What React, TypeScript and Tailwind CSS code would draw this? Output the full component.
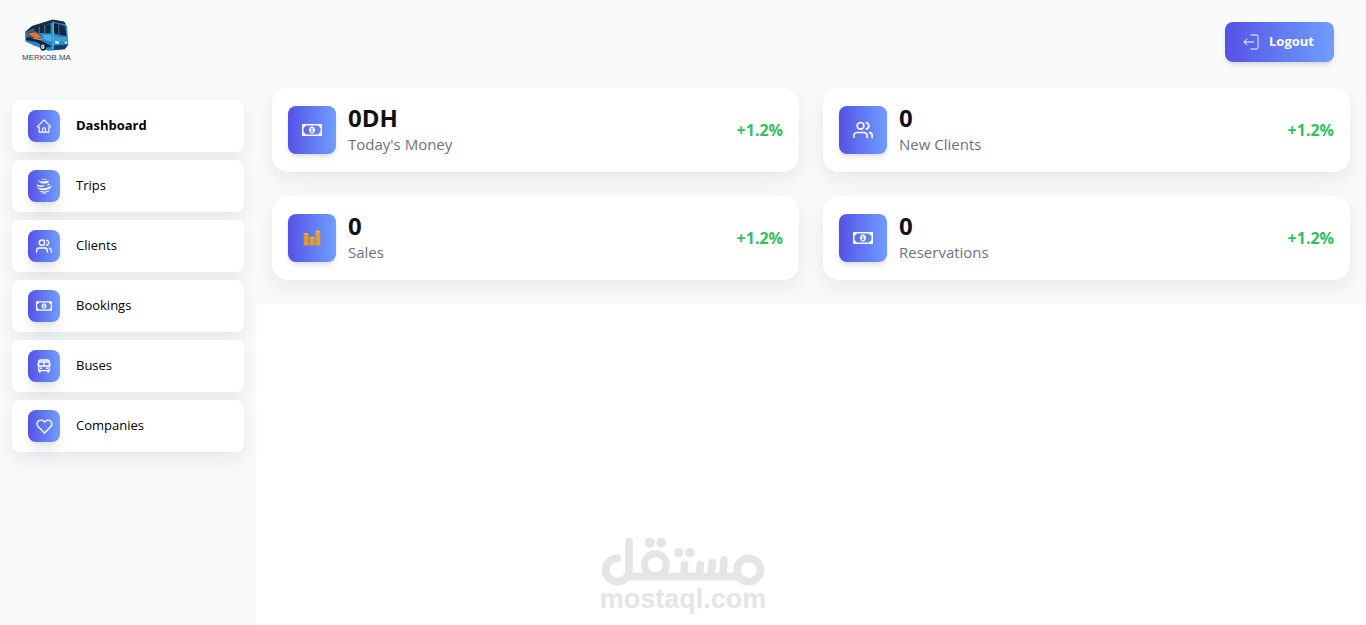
import React from "react";
import { AiOutlineHome } from "react-icons/ai";
import { FiUsers, FiHeart } from "react-icons/fi";
import { FaRegMoneyBillAlt } from "react-icons/fa";
import { BiBus } from "react-icons/bi";
import { FcSalesPerformance } from "react-icons/fc";
import { CiLogout } from "react-icons/ci";

type LinkItem = {
  title: string;
  href: string;
  icon: React.ReactNode;
};

type Stat = {
  value: string;
  label: string;
  percent: string;
  icon: React.ReactNode;
};

const TripsIcon: React.FC = () => (
  <svg
    viewBox="0 0 16 16"
    width="16"
    height="16"
    fill="currentColor"
    aria-hidden="true"
  >
    <path d="M5 .2C5.600 1.600 8 1.900 11.200.5 9.500 2.800 5.400 2.800 5 .2Z" />
    <path d="M2.500 2C3.800 3.800 8.500 4 12.300 2.600 13.200 3.600 12.500 4.700 11 5.200 7 6.200 2.200 4.800 2.500 2Z" />
    <path d="M.6 6.300C3 7.800 6 7.900 9.200 6.900 8 9.500 1 9.900.6 6.300Z" />
    <path d="M12 5.600C13.400 5.600 14 6.400 13 7.300L11.200 8.300Z" />
    <path d="M.8 9.100C4 11.300 10.500 10.900 15.800 7.600 15.400 12.800 2.500 14 .8 9.100Z" />
    <path d="M3.200 12.700C6 14 10.500 13.700 14 11.900 12 15.300 5 15.600 3.200 12.700Z" />
    <path d="M6.200 15C8 15.500 9.500 15.400 11 14.900 9.700 16.200 7.500 16.200 6.200 15Z" />
  </svg>
);

const links: LinkItem[] = [
  { title: "Dashboard", href: "#dashboard", icon: <AiOutlineHome size={16} /> },
  { title: "Trips", href: "#trips", icon: <TripsIcon /> },
  { title: "Clients", href: "#clients", icon: <FiUsers size={16} /> },
  { title: "Bookings", href: "#bookings", icon: <FaRegMoneyBillAlt size={16} /> },
  { title: "Buses", href: "#buses", icon: <BiBus size={16} /> },
  { title: "Companies", href: "#companies", icon: <FiHeart size={17} /> },
];

const stats: Stat[] = [
  {
    value: "0DH",
    label: "Today's Money",
    percent: "+1.2%",
    icon: <FaRegMoneyBillAlt size={20} />,
  },
  {
    value: "0",
    label: "New Clients",
    percent: "+1.2%",
    icon: <FiUsers size={20} />,
  },
  {
    value: "0",
    label: "Sales",
    percent: "+1.2%",
    icon: <FcSalesPerformance size={20} />,
  },
  {
    value: "0",
    label: "Reservations",
    percent: "+1.2%",
    icon: <FaRegMoneyBillAlt size={20} />,
  },
];

const BusLogo: React.FC = () => (
  <svg viewBox="40 24 140 100" width="47" height="34" aria-hidden="true">
    <path
      d="M46 64 70 46 128 29 162 35 171 48 175 104 164 117 116 121 76 107 47 93Z"
      fill="#2484c4"
    />
    <path d="M66 48 128 28 162 34 168 42 132 36 74 55 46 66Z" fill="#1d2b3f" />
    <path d="M75 52 122 41 122 69 72 67Z" fill="#182438" />
    <path d="M88 49v18M105 45v23" stroke="#3b86b8" strokeWidth="3" />
    <path d="M132 39 145 41 146 73 133 69Z" fill="#162033" />
    <path d="M147 42 165 48 170 77 149 74Z" fill="#1b263b" />
    <path d="M130 34v82" stroke="#5bb4e6" strokeWidth="4" />
    <path d="M50 67 72 58 94 76 83 92 60 84Z" fill="#5b4a4c" />
    <path d="M54 70 82 86 94 79 77 66Z" fill="#d97a43" />
    <path d="M51 80 84 86 126 108 112 111 79 95 49 89Z" fill="#142238" />
    <path d="M70 84 91 88 108 82" stroke="#e58b51" strokeWidth="3" fill="none" />
    <path d="M98 73 125 73 125 94 107 90Z" fill="#4bb2e9" />
    <path d="M132 78 171 82 173 96 132 92Z" fill="#3d9bd6" />
    <path d="M136 91 148 94 146 101 135 99ZM161 96 172 93 171 101Z" fill="#dce9f1" />
    <path d="M132 105 173 103 164 116 132 119Z" fill="#153b60" />
    <ellipse cx="100" cy="109" rx="9" ry="12" fill="#151e2c" />
    <ellipse cx="99" cy="109" rx="5" ry="7" fill="#f2f3f4" />
    <circle cx="99" cy="109" r="2" fill="#30394a" />
  </svg>
);

const Header: React.FC = () => {
  return (
    <header className="flex items-start justify-between bg-[#f9fafb] pr-8 pb-5 pl-5.5">
      <a
        href="#home"
        className="mt-4.5 flex flex-col items-center text-[#3c4350]"
      >
        <BusLogo />
        <span className="font-['Liberation_Sans',sans-serif] text-[8px] leading-3">
          MERKOB.MA
        </span>
      </a>
      <button
        type="button"
        className="mt-5.5 flex h-10 items-center gap-2 rounded-lg bg-linear-to-r from-[#5651e5] to-[#709dff] pr-5 pl-4 text-[13px] font-bold text-white shadow-md"
      >
        <CiLogout size={20} />
        Logout
      </button>
    </header>
  );
};

const Sidebar: React.FC = () => {
  return (
    <aside className="w-64 shrink-0 bg-[#f9fafb] px-3 pt-4">
      <nav>
        <ul className="space-y-2">
          {links.map((link, index) => (
            <li key={link.title}>
              <a
                href={link.href}
                className={`flex h-13 items-center gap-4 rounded-lg bg-white px-4 text-[13px] text-black shadow-[0_8px_20px_rgba(15,23,42,0.08)] ${
                  index === 0 ? "font-bold" : "font-normal"
                }`}
              >
                <span className="flex size-8 items-center justify-center rounded-lg bg-linear-to-r from-[#5651e5] to-[#709dff] text-white shadow-lg">
                  {link.icon}
                </span>
                {link.title}
              </a>
            </li>
          ))}
        </ul>
      </nav>
    </aside>
  );
};

const StatCard: React.FC<{ stat: Stat }> = ({ stat }) => {
  return (
    <div className="flex items-center rounded-2xl bg-white p-4 shadow-[0_8px_20px_rgba(15,23,42,0.08)]">
      <div className="flex size-12 items-center justify-center rounded-lg bg-linear-to-r from-[#5651e5] to-[#709dff] text-white shadow-md">
        {stat.icon}
      </div>
      <div className="ml-3 flex-1">
        <p className="text-2xl leading-7 font-bold text-[#0f1115]">{stat.value}</p>
        <p className="text-[15px] leading-6 text-gray-500">{stat.label}</p>
      </div>
      <p className="font-bold text-[#2fbf60]">{stat.percent}</p>
    </div>
  );
};

const Watermark: React.FC = () => (
  <div className="pointer-events-none absolute inset-x-0 bottom-3.5 flex flex-col items-center text-[#e5e5e5]">
    <svg
      viewBox="32 34 492 150"
      width="164"
      height="50"
      fill="none"
      stroke="currentColor"
      strokeWidth="23"
      strokeLinecap="round"
      role="img"
      aria-label="مستقل"
    >
      <path d="M80 98A35 35 0 1 0 116 133V48" />
      <path d="M116 153H438" />
      <circle cx="195" cy="117" r="33" strokeWidth="21" />
      <circle cx="475" cy="133" r="35" />
      <path d="M283 117 281 150M330 117 326 150M366 110 362 150M401 103 397 150" />
      <g fill="currentColor" stroke="none">
        <path d="M438 141.500 475 156V165H438Z" />
        <circle cx="178" cy="51" r="15" />
        <circle cx="213" cy="51" r="15" />
        <circle cx="265" cy="81" r="14" />
        <circle cx="299" cy="81" r="14" />
      </g>
    </svg>
    <span className="font-['Liberation_Sans',sans-serif] text-[27px] leading-6 font-bold">
      mostaql.com
    </span>
  </div>
);

const App: React.FC = () => {
  return (
    <div className="relative flex min-h-screen flex-col bg-white font-['Open_Sans','Noto_Sans',sans-serif]">
      <Header />
      <div className="flex flex-1">
        <Sidebar />
        <main className="flex-1">
          <section className="grid grid-cols-1 gap-6 overflow-hidden bg-[#f9fafb] px-4 pt-1 pb-6 md:grid-cols-2">
            {stats.map((stat) => (
              <StatCard key={stat.label} stat={stat} />
            ))}
          </section>
        </main>
      </div>
      <Watermark />
    </div>
  );
};

export default App;
